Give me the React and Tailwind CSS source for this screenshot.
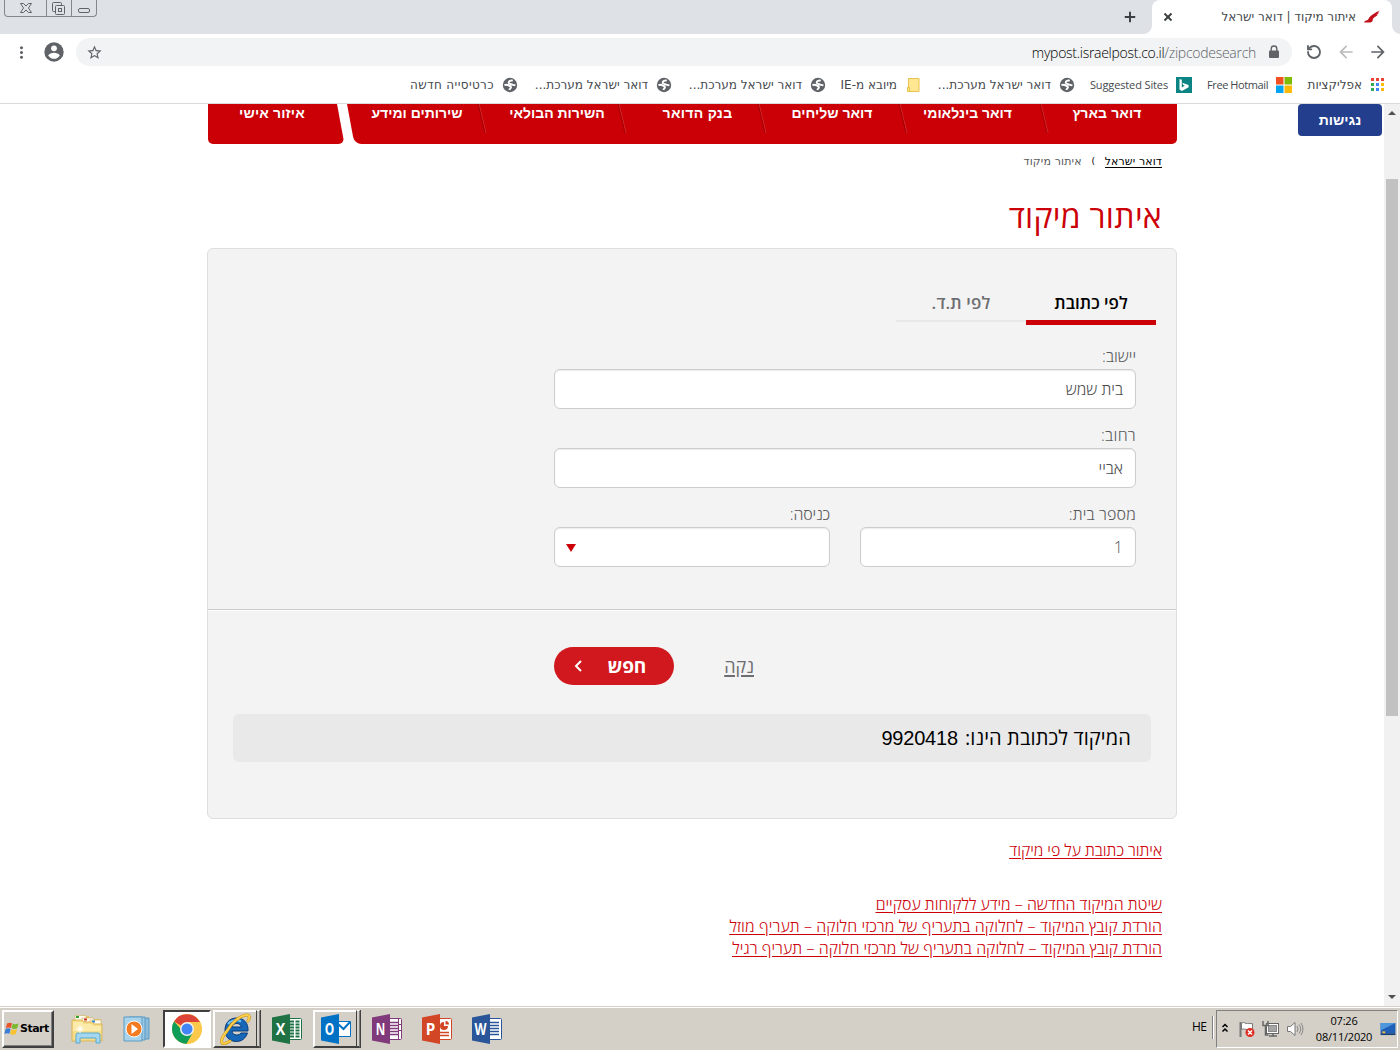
import { Plus, RotateCcw, X } from "lucide-react";
import { MdArrowBack, MdArrowForward, MdMoreVert, MdStarBorder } from "react-icons/md";

const ui = "font-['DejaVu_Sans',sans-serif] text-[12px]";
const uiLatin = "font-['Open_Sans',sans-serif] text-[12px] tracking-[-0.72px]";

function GlobeIcon() {
  return (
    <svg viewBox="0 0 16 16" className="size-4">
      <circle cx="8" cy="8" r="7.200" fill="#5f6368" />
      <path d="M10.800 3.600C8.800 3.200 6.600 3.900 6.700 5.600c.1 1.800 2.500 1.400 3.600 2 1.200.6 2.600.6 3 1M2.400 8.200c1.500-.5 3.300-.4 4.200.3 1 .7 2.600.5 2.400 1.900-.1 1-1.300 1-1.800 2.500" fill="none" stroke="#fff" strokeWidth="1.900" />
    </svg>
  );
}

function AppsIcon() {
  const colors = ["#ea4335", "#ea4335", "#ea4335", "#34a853", "#4285f4", "#fbbc05", "#34a853", "#4285f4", "#fbbc05"];
  return (
    <svg viewBox="0 0 16 16" className="size-4">
      {colors.map((c, i) => (
        <rect key={i} x={1 + (i % 3) * 5} y={1 + Math.floor(i / 3) * 5} width="3" height="3" fill={c} />
      ))}
    </svg>
  );
}

function MicrosoftIcon() {
  return (
    <svg viewBox="0 0 16 16" className="size-4">
      <path d="M0 0h7.500v7.500H0z" fill="#f35022" />
      <path d="M8.500 0H16v7.500H8.500z" fill="#80bb03" />
      <path d="M0 8.500h7.500V16H0z" fill="#03a5f0" />
      <path d="M8.500 8.500H16V16H8.500z" fill="#ffba08" />
    </svg>
  );
}

function BingIcon() {
  return (
    <svg viewBox="0 0 16 16" className="size-4">
      <path d="M0 0h16v16H0z" fill="#0c8484" />
      <path d="M3.500 2l2.300.8v7.600l2.900-1.700-1.500-.7-.9-2.300 6.300 2.200v2.300L5.900 14l-2.400-1.400z" fill="#fff" />
    </svg>
  );
}

function FolderIcon() {
  return (
    <svg viewBox="0 0 16 16" className="size-4">
      <path d="M3.500 1.500h10.500v13H2.500v-4h1z" fill="#ffe693" stroke="#e8c34a" />
      <path d="M2.500 10.500h2v4" fill="none" stroke="#e8c34a" />
    </svg>
  );
}

const bookmarks = [
  { icon: AppsIcon, label: "אפליקציות", box: "w-[94px]", text: "" },
  { icon: MicrosoftIcon, label: "Free Hotmail", box: "w-[100px]", text: "font-['Open_Sans',sans-serif] text-[11px] tracking-[-0.41px]" },
  { icon: BingIcon, label: "Suggested Sites", box: "w-[117px]", text: "font-['Open_Sans',sans-serif] text-[11px] tracking-[-0.13px]" },
  { icon: GlobeIcon, label: "דואר ישראל מערכת...", box: "w-[154px]", text: "" },
  { icon: FolderIcon, label: "מיובא מ-IE", box: "w-[95px]", text: "" },
  { icon: GlobeIcon, label: "דואר ישראל מערכת...", box: "w-[154px]", text: "" },
  { icon: GlobeIcon, label: "דואר ישראל מערכת...", box: "w-[154px]", text: "" },
  { icon: GlobeIcon, label: "כרטיסייה חדשה", box: "w-[130px]", text: "tracking-[0.38px]" },
];

function TabStrip() {
  return (
    <div className="flex h-[34px] bg-[#dee1e6] pr-2">
      <div className="relative flex h-full w-[240px] items-center rounded-t-lg bg-white pr-3 pl-[9px]">
        <span className="absolute -right-2 bottom-0 size-2 bg-[radial-gradient(circle_at_top_right,transparent_7.500px,white_8px)]" />
        <span className="absolute bottom-0 -left-2 size-2 bg-[radial-gradient(circle_at_top_left,transparent_7.500px,white_8px)]" />
        <svg viewBox="0 0 16 16" className="size-4">
          <path d="M0 13.500c.5-1.800 2-2 3.500-2.600 1.200-.6 1-2 2.200-3C8 6 11 3.300 16 1.500l-2.500 2.300 2-.3-3.200 2.400 1.700-.2C12 7.500 9.500 8.500 8.800 10c.3 1.700-.8 3-2.300 3.500z" fill="#c01019" />
        </svg>
        <span className={`${ui} mr-2 grow whitespace-nowrap text-[#45494d]`}>איתור מיקוד | דואר ישראל</span>
        <X className="size-[14px] text-[#3c4043]" strokeWidth={3.200} strokeLinecap="butt" />
      </div>
      <Plus className="mt-[8px] mr-[13px] size-[18px] text-[#3c4043]" strokeWidth={2.600} strokeLinecap="butt" />
      <div className="mr-auto ml-1 flex h-[17px] rounded-b-[4px] border border-t-0 border-[#84878c] *:border-[#84878c]">
        <div className="flex w-[24px] items-center justify-center">
          <span className="mt-1 h-[5px] w-[12px] rounded-[2px] border border-[#606367]" />
        </div>
        <div className="flex w-[26px] justify-center border-r border-l">
          <svg viewBox="0 0 14 14" className="mt-[2px] size-[14px] shrink-0" fill="none" stroke="#606367">
            <path d="M3.500 9.500h-2a1 1 0 0 1-1-1v-7a1 1 0 0 1 1-1h7a1 1 0 0 1 1 1v2" />
            <rect x="3.500" y="3.500" width="9" height="9" rx="1" />
            <rect x="6.500" y="6.500" width="3" height="3" />
          </svg>
        </div>
        <div className="flex w-[41px] justify-center">
          <svg viewBox="0 0 12 12" className="mt-[2px] size-[12px]" fill="none" stroke="#606367">
            <path d="M.5 1.500h3L6 4l2.500-2.500h3L8.500 6l3 4.500h-3L6 8l-2.500 2.500h-3L3.500 6z" />
          </svg>
        </div>
      </div>
    </div>
  );
}

function Toolbar() {
  return (
    <div className="flex h-[36px] items-center pr-3 text-[#5f6368]">
      <MdArrowForward className="size-5" />
      <MdArrowBack className="mr-3 size-5 text-[#babcbe]" />
      <RotateCcw className="mr-[14px] ml-[2px] size-4" strokeWidth={2.800} />
      <div className="mr-[12px] flex h-[28px] w-[1216px] items-center rounded-full bg-[#f1f3f4] px-[10px]">
        <svg viewBox="0 0 16 16" className="size-4">
          <path d="M4 6.500h8a1 1 0 0 1 1 1V13a1 1 0 0 1-1 1H4a1 1 0 0 1-1-1V7.500a1 1 0 0 1 1-1z" fill="#5f6368" />
          <path d="M5.200 7V4.800a2.800 2.800 0 0 1 5.600 0V7" fill="none" stroke="#5f6368" strokeWidth="1.400" />
        </svg>
        <span dir="ltr" className="mr-[10px] font-['Open_Sans',sans-serif] text-[14px] font-light tracking-[-0.28px] whitespace-nowrap">
          <span className="text-black">mypost.israelpost.co.il</span>
          /zipcodesearch
        </span>
        <MdStarBorder className="mr-auto size-[17px]" />
      </div>
      <svg viewBox="0 0 20 20" className="mr-[12px] size-5">
        <circle cx="10" cy="10" r="9.700" fill="#5f6368" />
        <circle cx="10" cy="6.300" r="2.900" fill="#fff" />
        <path d="M4.200 13.600c.6-2 3.700-2.900 5.800-2.900s5.200.9 5.800 2.900a6.900 6.900 0 0 1-11.600 0z" fill="#fff" />
      </svg>
      <MdMoreVert className="mr-[13px] size-[19px]" />
    </div>
  );
}

function Bookmarks() {
  return (
    <div className="flex h-[34px] items-center border-b border-[#d9dadc] pr-[14px] pb-[3px]">
      {bookmarks.map(({ icon: Icon, label, box, text }, i) => (
        <div key={i} className={`${box} ${ui} flex shrink-0 items-center gap-2 whitespace-nowrap text-[#45494d]`}>
          <Icon />
          <span className={text}>{label}</span>
        </div>
      ))}
    </div>
  );
}

const navItems = [
  ["דואר בארץ", "w-[134px] pr-[6px]", "tracking-[0.1px]"],
  ["דואר בינלאומי", "w-[141px] pr-[10px]", ""],
  ["דואר שליחים", "w-[141px] pl-px", ""],
  ["בנק הדואר", "w-[140px] pl-[13px]", "tracking-[0.3px]"],
  ["השירות הבולאי", "w-[140px] pl-[12px]", ""],
  ["שירותים ומידע", "w-[136px] pl-[8px]", ""],
];

function Nav() {
  return (
    <nav className="mr-[207px] flex h-[40px] w-[969px] justify-between font-['Liberation_Sans',sans-serif] text-[14px] leading-[18px] font-bold text-white">
      <div className="relative isolate flex w-[830px] overflow-hidden">
        <span className="absolute inset-y-0 right-0 -z-10 w-[700px] rounded-br-[5px] bg-[#cb0006]" />
        <span className="absolute inset-y-0 right-[20px] left-0 -z-10 origin-top skew-x-[10.500deg] rounded-bl-[7px] bg-[#cb0006]" />
        {navItems.map(([label, box, track], i) => (
          <div key={label} className={`relative shrink-0 text-center whitespace-nowrap ${box}`}>
            <span className={track}>{label}</span>
            {i < 5 && <span className="absolute top-0 left-0 h-[29px] w-[2px] skew-x-[13.500deg] border-r border-l border-r-[#d62a2e] border-l-[#a00005]" />}
          </div>
        ))}
      </div>
      <div className="relative isolate w-[136px] overflow-hidden text-center">
        <span className="absolute inset-y-0 left-0 -z-10 w-[100px] rounded-bl-[5px] bg-[#cb0006]" />
        <span className="absolute inset-y-0 right-[7px] left-[20px] -z-10 origin-top skew-x-[10.500deg] rounded-br-[6px] bg-[#cb0006]" />
        <span className="mr-[8px] tracking-[0.15px]">איזור אישי</span>
      </div>
    </nav>
  );
}

function Field({ label, value, className = "", labelTrack = "", children }) {
  return (
    <label className={`block ${className}`}>
      <span className={`block h-[24px] text-[16px] leading-[22px] font-light text-[#58595b] ${labelTrack}`}>{label}</span>
      <span className="flex h-[40px] items-center rounded-[6px] border border-[#ccc] bg-white pr-[12px] pl-[11px] text-[16px] font-light text-[#4b4c4e] shadow-[inset_0_1px_1px_rgba(0,0,0,0.08)]">
        {value}
        {children}
      </span>
    </label>
  );
}

function Panel() {
  return (
    <section className="mt-[12px] mr-[207px] h-[571px] w-[970px] rounded-[6px] border border-[#dedede] bg-[#f3f3f3]">
      <div className="flex h-[76px] items-end pr-[20px] text-[17px] leading-[28px] font-semibold">
        <div className="h-[36px] w-[130px] border-b-[5px] border-[#cc0007] text-center text-black">לפי כתובת</div>
        <div className="mb-[3px] h-[33px] w-[130px] border-b-2 border-[#e8e8e8] text-center tracking-[0.15px] text-[#6d6e71]">
          לפי ת.ד.
        </div>
      </div>
      <div className="mr-[40px] w-[582px] pt-[20px]">
        <Field label="יישוב:" value="בית שמש" />
        <Field label="רחוב:" value="אביי" className="mt-[15px]" labelTrack="tracking-[0.3px]" />
        <div className="mt-[15px] flex justify-between">
          <Field label="מספר בית:" value="1" className="w-[276px]" labelTrack="tracking-[0.15px]" />
          <Field label="כניסה:" className="w-[276px]" labelTrack="tracking-[-0.2px]">
            <svg viewBox="0 0 10 8" className="mt-[2px] mr-auto h-[8px] w-[10px]">
              <path d="M0 0h10L5 8z" fill="#cc0007" />
            </svg>
          </Field>
        </div>
      </div>
      <div className="mt-[42px] h-[2px] border-b border-t border-t-[#ccc] border-b-white" />
      <div className="mt-[36px] mr-[422px] flex h-[38px] w-[200px] items-center justify-between">
        <span className="text-[18px] text-[#6d6e71] underline decoration-2 underline-offset-[2px]">נקה</span>
        <button className="flex h-[38px] w-[120px] items-center justify-between rounded-full bg-[#d0181e] pr-[28px] pl-[20px] text-[19px] font-bold tracking-[-0.2px] text-white">
          חפש
          <svg viewBox="0 0 8 12" className="h-[12px] w-[8px]" fill="none" stroke="#fff" strokeWidth="2">
            <path d="M7 1L2 6l5 5" />
          </svg>
        </button>
      </div>
      <div className="mx-[25px] mt-[29px] flex h-[48px] items-center gap-[7px] rounded-[6px] bg-[#e9e9e9] pr-[20px] text-[20px] text-black">
        <span className="tracking-[0.12px]">המיקוד לכתובת הינו:</span>
        <span className="font-['Liberation_Sans',sans-serif] tracking-[-0.2px]">9920418</span>
      </div>
    </section>
  );
}

function Page() {
  return (
    <div className="flex h-[902px]">
      <div className="flex w-[16px] shrink-0 flex-col items-center bg-[#f1f1f1]">
        <svg viewBox="0 0 8 4" className="mt-[7px] h-[4px] w-[8px]"><path d="M0 4h8L4 0z" fill="#505050" /></svg>
        <div className="mt-[64px] h-[537px] w-[12px] bg-[#c1c1c1]" />
        <svg viewBox="0 0 8 4" className="mt-auto mb-[7px] h-[4px] w-[8px]"><path d="M0 0h8L4 4z" fill="#505050" /></svg>
      </div>
      <main className="relative w-[1384px] shrink-0 bg-white font-['Open_Sans',sans-serif]">
        <div className="absolute top-0 right-[2px] flex h-[32px] w-[84px] items-center justify-center rounded-[4px] bg-[#243e8e] font-['Liberation_Sans',sans-serif] text-[14px] font-bold text-white">
          נגישות
        </div>
        <Nav />
        <div className="mt-[8px] flex h-[20px] items-center pr-[222px] font-['DejaVu_Sans',sans-serif] text-[11px]">
          <span className="border-b border-black leading-[11px] tracking-[0.12px] text-black">דואר ישראל</span>
          <span className="w-[23px] text-center text-[9px] text-black">)</span>
          <span className="tracking-[0.15px] text-[#58595b]">איתור מיקוד</span>
        </div>
        <h1 className="mt-[24px] h-[40px] pr-[222px] text-[32px] leading-[40px] tracking-[0.3px] text-[#cc0007]">איתור מיקוד</h1>
        <Panel />
        <div className="mt-[20px] flex flex-col items-start pr-[222px] text-[16px] leading-[22px] font-light whitespace-nowrap text-[#cc0007] underline underline-offset-[2px]">
          <a className="tracking-[-0.06px]">איתור כתובת על פי מיקוד</a>
          <a className="mt-[32px] tracking-[-0.02px]">שיטת המיקוד החדשה – מידע ללקוחות עסקיים</a>
          <a className="tracking-[0.1px]">הורדת קובץ המיקוד – לחלוקה בתעריף של מרכזי חלוקה – תעריף מוזל</a>
          <a className="tracking-[0.05px]">הורדת קובץ המיקוד – לחלוקה בתעריף של מרכזי חלוקה – תעריף רגיל</a>
        </div>
      </main>
    </div>
  );
}

function OfficeIcon({ color, letter, children }) {
  return (
    <svg viewBox="0 0 30 30" className="size-[30px]">
      {children}
      <path d="M0 3.500L18 0v30L0 26.500z" fill={color} />
      <text x="8.500" y="20.800" textAnchor="middle" fill="#fff" fontFamily="Open Sans" fontWeight="700" fontSize="16" textLength={letter === "W" ? 12 : 9.500} lengthAdjust="spacingAndGlyphs">
        {letter}
      </text>
    </svg>
  );
}

function LinedSheet({ color }) {
  return (
    <>
      <rect x="16.500" y="4.500" width="13" height="21" rx="1" fill="#fff" stroke={color} />
      <path d="M18 8.500h9M18 11.500h9M18 14.500h9M18 17.500h9M18 20.500h9" stroke={color} strokeWidth="1.300" />
    </>
  );
}

function ExplorerIcon() {
  return (
    <svg viewBox="0 0 32 32" className="size-[32px]">
      <path d="M4 3h14l1 3h11v4h1v18H4z" fill="#e9c96b" />
      <path d="M4 2.500h11v6H4zM11 5h12v5H11zM19 7h11v5H19z" fill="#fffdf0" stroke="#c9ad5c" strokeWidth=".6" />
      <path d="M5 3h3v2H5z" fill="#2fa52f" />
      <path d="M13 5.500h3v2h-3z" fill="#d8352a" />
      <path d="M21 7.500h3v2h-3z" fill="#2f8ed8" />
      <path d="M1 7h10l2 2h8l2 2h8v17H1z" fill="#f6dd8a" stroke="#d9b45a" />
      <path d="M2 9h9l2 2h7l2 2h8v5H2z" fill="#fdf0b8" opacity=".7" />
      <path d="M5 30v-8q0-2 2-2h20q2 0 2 2v8h-4v-5H9v5z" fill="#a5d8f0" stroke="#5ba9cf" />
      <path d="M9 12v8M5 16h8M6.500 13.500l5 5M11.500 13.500l-5 5" stroke="#fff" />
    </svg>
  );
}

function MediaIcon() {
  return (
    <svg viewBox="0 0 30 28" className="h-[28px] w-[30px]">
      <path d="M11 3h16v21H11z" fill="#8bbbd9" stroke="#5a9bc4" />
      <path d="M7 2h16v23H7z" fill="#9cc9e3" stroke="#5a9bc4" />
      <path d="M2 2h18v24H2z" fill="#a9d3ea" stroke="#5a9bc4" />
      <circle cx="12" cy="14" r="8" fill="#f47b20" stroke="#fff" />
      <path d="M9.500 9l6.500 5-6.500 5z" fill="#fff" />
    </svg>
  );
}

function ChromeIcon() {
  return (
    <svg viewBox="0 0 30 30" className="size-[30px]">
      <circle cx="15" cy="15" r="15" fill="#fbc94a" />
      <path d="M15 15L2 7.500A15 15 0 0 1 28 8H15z" fill="#db4437" />
      <path d="M15 15H8.900L2 7.500A15 15 0 0 0 14.500 30l6.500-11z" fill="#0f9d58" />
      <path d="M15 8h13a15 15 0 0 1-13.500 22l6.500-11.500z" fill="#fbc94a" />
      <circle cx="15" cy="15" r="7" fill="#f1f1f1" />
      <circle cx="15" cy="15" r="5.500" fill="#4285f4" />
    </svg>
  );
}

function IeIcon() {
  return (
    <svg viewBox="0 0 32 32" className="size-[32px]">
      <path d="M16.500 5c7.500 0 12 5 11.500 13H12c.3 2.500 2 4 4.700 4 2 0 3.500-.7 4.200-2H27.500C25.800 25 22 28.500 16.500 28.500 9.500 28.500 5 24 5 17S9.500 5 16.500 5zM12 14h9.200c-.4-2.200-2-3.500-4.500-3.500s-4.200 1.200-4.700 3.500z" fill="#1667b8" stroke="#083a7c" />
      <path d="M8 11c2.500-3.600 8-5 13-2.500" fill="none" stroke="#6fc3f5" strokeWidth="2.200" />
      <path d="M7 18C-2 29 1 34 10 28M7 18C12 9 20 3 26 2c4-.3 4 3 2 6" fill="none" stroke="#c98d14" strokeWidth="3" strokeLinecap="round" />
      <path d="M7 18C-2 29 1 34 10 28M7 18C12 9 20 3 26 2c4-.3 4 3 2 6" fill="none" stroke="#fbd04a" strokeWidth="2" strokeLinecap="round" />
    </svg>
  );
}

function WindowsFlag() {
  return (
    <svg viewBox="0 0 16 14" className="h-[14px] w-[16px] shrink-0">
      <path d="M3 1.500C5 .3 6.500.5 8 1.300L6.800 6C5.300 5.300 3.700 5.200 1.800 6.200z" fill="#e8552b" />
      <path d="M8.700 1.600c1.700.8 3.500.8 5.800-.3l-1.200 4.900c-2 1-4 1-5.800.1z" fill="#7cb82f" />
      <path d="M1.600 7c1.900-1 3.500-.8 5 0l-1.200 4.800C4 11 2.300 11 .4 12z" fill="#3a7fd5" />
      <path d="M7.300 7.300c1.800.9 3.700.8 5.700-.1l-1.200 4.800c-2 1-3.900 1-5.700.1z" fill="#f9c22e" />
    </svg>
  );
}

function Slot({ children }) {
  return <div className="flex h-[42px] w-[50px] items-center justify-center">{children}</div>;
}

function StackedSlot({ children }) {
  return (
    <div className="flex h-[42px] w-[50px] items-start pt-[2px] pl-px">
      <div className="flex h-[38px] w-[43px] items-center justify-center border-2 border-r-0 border-t-white border-b-[#404040] border-l-white">
        {children}
      </div>
      <div className="h-[38px] w-[4px] border border-b-2 border-t-white border-r-[#808080] border-b-[#404040] border-l-[#404040]" />
      <div className="h-[38px] w-px bg-[#404040]" />
    </div>
  );
}

function Taskbar() {
  return (
    <footer dir="ltr" className="flex h-[44px] items-start bg-[#d4d0c8] pt-[2px] shadow-[inset_0_1px_0_#d4d0c8,inset_0_2px_0_#fff]">
      <div className="mt-[2px] mr-[8px] ml-[2px] flex h-[38px] w-[52px] items-center border-2 border-t-white border-r-[#404040] border-b-[#404040] border-l-white font-['DejaVu_Sans',sans-serif] text-[11px] font-bold tracking-[-0.5px] text-black shadow-[inset_-1px_-1px_0_#808080]">
        <WindowsFlag />
        Start
      </div>
      <Slot><ExplorerIcon /></Slot>
      <Slot><MediaIcon /></Slot>
      <div className="flex h-[42px] w-[50px] items-start justify-center pt-[2px]">
        <div className="flex h-[38px] w-[48px] items-center justify-center border-2 border-t-[#404040] border-r-white border-b-white border-l-[#404040] bg-white">
          <ChromeIcon />
        </div>
      </div>
      <StackedSlot><IeIcon /></StackedSlot>
      <Slot>
        <OfficeIcon color="#1f7244" letter="X">
          <rect x="16.500" y="4.500" width="13" height="21" rx="1" fill="#fff" stroke="#1f7244" />
          <path d="M18 7.500h4M18 10.500h4M18 13.500h4M18 16.500h4M18 19.500h4M18 22.500h4M23.500 7.500h4M23.500 10.500h4M23.500 13.500h4M23.500 16.500h4M23.500 19.500h4M23.500 22.500h4" stroke="#1f7244" strokeWidth="2" />
        </OfficeIcon>
      </Slot>
      <StackedSlot>
        <OfficeIcon color="#0072c6" letter="O">
          <path d="M16 7.500h13.500v15H16z" fill="#fff" stroke="#0072c6" />
          <path d="M17 10l5.500 5L29 8" fill="none" stroke="#0072c6" strokeWidth="2" />
        </OfficeIcon>
      </StackedSlot>
      <Slot>
        <OfficeIcon color="#80397b" letter="N">
          <LinedSheet color="#80397b" />
          <path d="M26.500 5v20M27 10.500h3M27 16.500h3" stroke="#80397b" />
        </OfficeIcon>
      </Slot>
      <Slot>
        <OfficeIcon color="#d24625" letter="P">
          <rect x="16.500" y="4.500" width="13" height="21" rx="1" fill="#fff" stroke="#d24625" />
          <path d="M22 8a4 4 0 1 0 4 4h-4zM23.500 7v3.500H27A3.500 3.500 0 0 0 23.500 7z" fill="#d24625" />
          <path d="M18 18.500h9M18 21.500h9" stroke="#d24625" strokeWidth="1.500" />
        </OfficeIcon>
      </Slot>
      <Slot>
        <OfficeIcon color="#2a5699" letter="W">
          <LinedSheet color="#2a5699" />
        </OfficeIcon>
      </Slot>
      <span className={`${uiLatin} mt-[10px] ml-auto w-[20px] text-black`}>HE</span>
      <div className="mt-[8px] h-[23px] w-[2px] border-r border-l border-r-white border-l-[#808080]" />
      <div className="mt-[2px] mr-[2px] ml-[2px] flex h-[38px] w-[182px] items-center border border-t-[#808080] border-r-white border-b-white border-l-[#808080] pl-[4px]">
        <svg viewBox="0 0 8 10" className="mb-[2px] h-[10px] w-[8px]" fill="none" stroke="#000" strokeWidth="1.500"><path d="M1.500 4L4 1.500 6.500 4M1.500 8.500L4 6l2.500 2.500" /></svg>
        <svg viewBox="0 0 18 18" className="ml-[9px] size-[18px]">
          <path d="M2.500 2v15" stroke="#777" strokeWidth="2" />
          <path d="M3.500 3c3-1.500 4 1 6 .5s3 .5 5 0v6c-2 .5-3-.5-5 0s-3-1.500-6 0z" fill="#fff" stroke="#777" />
          <circle cx="12" cy="12.500" r="4.500" fill="#dd2c22" />
          <path d="M10 10.500l4 4M14 10.500l-4 4" stroke="#fff" strokeWidth="1.500" />
        </svg>
        <svg viewBox="0 0 18 18" className="ml-[6px] size-[18px]">
          <rect x="4.500" y="3.500" width="12" height="10" fill="#fff" stroke="#666" />
          <rect x="6.500" y="5.500" width="8" height="6" fill="#a6a6a6" stroke="#888" />
          <path d="M7 16h8M11 13v3" stroke="#666" strokeWidth="1.500" />
          <path d="M1 1v4.500h5V1M3.500 5v10h3" fill="none" stroke="#666" strokeWidth="1.500" />
        </svg>
        <svg viewBox="0 0 18 18" className="ml-[6px] size-[18px]">
          <path d="M1.500 6.500h3L9 2.500v13l-4.500-4h-3z" fill="#fff" stroke="#777" />
          <path d="M11 6q2 3 0 6M13 4.500q3.500 4.500 0 9M15 3q4 6 0 12" fill="none" stroke="#888" />
        </svg>
        <div className="ml-[10px] w-[60px] text-center font-['Open_Sans',sans-serif] text-[11px] leading-[16px] tracking-[-0.2px] whitespace-nowrap text-black">
          <div>07:26</div>
          <div>08/11/2020</div>
        </div>
        <svg viewBox="0 0 16 14" className="ml-[6px] h-[13px] w-[16px]">
          <path d="M0 0h16v11H0z" fill="#1f5fb5" />
          <path d="M0 0h16L0 8z" fill="#4f97dc" />
          <path d="M0 11h16v2H0z" fill="#173f78" />
          <path d="M2 9h3v2H2z" fill="#f3c23a" />
        </svg>
      </div>
    </footer>
  );
}

export default function App() {
  return (
    <div dir="rtl" className="h-[1050px] w-[1400px] overflow-hidden bg-white">
      <TabStrip />
      <Toolbar />
      <Bookmarks />
      <Page />
      <Taskbar />
    </div>
  );
}
